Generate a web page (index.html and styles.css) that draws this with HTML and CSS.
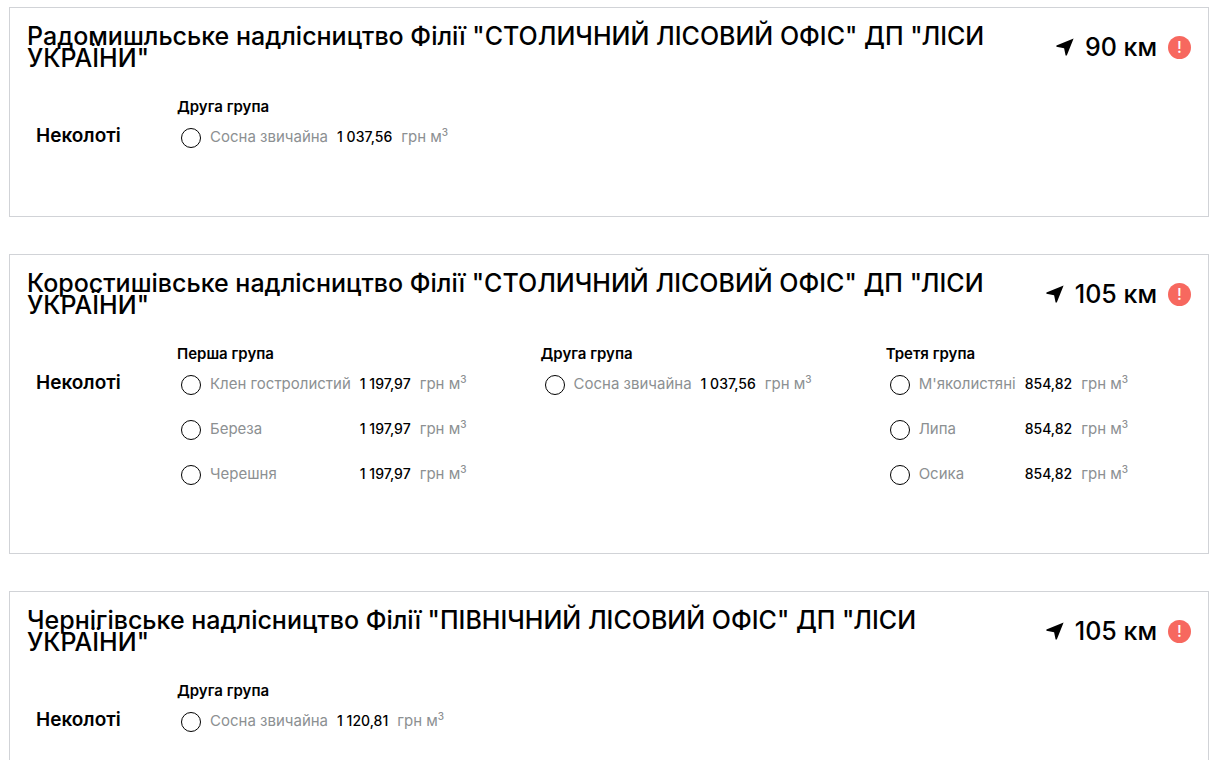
FILE: index.html
```html
<!DOCTYPE html>
<html lang="uk">
<head>
<meta charset="utf-8">
<title>Лісництва</title>
<link rel="stylesheet" href="styles.css">
</head>
<body>
<svg class="defs" aria-hidden="true">
<symbol id="nav" viewBox="0 0 18 18"><path d="M17.6.4.4 7.4v1.4l7.7 1.5 1.5 7.3h1.2z"/></symbol>
</svg>
<main class="list">
<article class="card">
<header class="head"><h2 class="title">Радомишльське надлісництво Філії "СТОЛИЧНИЙ ЛІСОВИЙ ОФІС" ДП "ЛІСИ УКРАЇНИ"</h2>
<div class="distance"><svg class="arrow" aria-hidden="true"><use href="#nav"/></svg><span>90 км</span><button class="alert" type="button" aria-label="Увага">!</button></div></header>
<div class="body"><h3 class="kind">Неколоті</h3><div class="groups">
<section class="group"><h4 class="name">Друга група</h4><div class="rows">
<label class="row"><input class="radio" type="radio" name="wood"><span class="wood">Сосна звичайна</span><span class="price">1 037,56</span><span class="unit">грн м<sup>3</sup></span></label>
</div></section></div></div>
</article>
<article class="card">
<header class="head"><h2 class="title">Коростишівське надлісництво Філії "СТОЛИЧНИЙ ЛІСОВИЙ ОФІС" ДП "ЛІСИ УКРАЇНИ"</h2>
<div class="distance"><svg class="arrow" aria-hidden="true"><use href="#nav"/></svg><span>105 км</span><button class="alert" type="button" aria-label="Увага">!</button></div></header>
<div class="body"><h3 class="kind">Неколоті</h3><div class="groups">
<section class="group"><h4 class="name">Перша група</h4><div class="rows">
<label class="row"><input class="radio" type="radio" name="wood"><span class="wood">Клен гостролистий</span><span class="price">1 197,97</span><span class="unit">грн м<sup>3</sup></span></label>
<label class="row"><input class="radio" type="radio" name="wood"><span class="wood">Береза</span><span class="price">1 197,97</span><span class="unit">грн м<sup>3</sup></span></label>
<label class="row"><input class="radio" type="radio" name="wood"><span class="wood">Черешня</span><span class="price">1 197,97</span><span class="unit">грн м<sup>3</sup></span></label>
</div></section>
<section class="group"><h4 class="name">Друга група</h4><div class="rows">
<label class="row"><input class="radio" type="radio" name="wood"><span class="wood">Сосна звичайна</span><span class="price">1 037,56</span><span class="unit">грн м<sup>3</sup></span></label>
</div></section>
<section class="group"><h4 class="name">Третя група</h4><div class="rows">
<label class="row"><input class="radio" type="radio" name="wood"><span class="wood">М'яколистяні</span><span class="price">854,82</span><span class="unit">грн м<sup>3</sup></span></label>
<label class="row"><input class="radio" type="radio" name="wood"><span class="wood">Липа</span><span class="price">854,82</span><span class="unit">грн м<sup>3</sup></span></label>
<label class="row"><input class="radio" type="radio" name="wood"><span class="wood">Осика</span><span class="price">854,82</span><span class="unit">грн м<sup>3</sup></span></label>
</div></section></div></div>
</article>
<article class="card">
<header class="head"><h2 class="title">Чернігівське надлісництво Філії "ПІВНІЧНИЙ ЛІСОВИЙ ОФІС" ДП "ЛІСИ УКРАЇНИ"</h2>
<div class="distance"><svg class="arrow" aria-hidden="true"><use href="#nav"/></svg><span>105 км</span><button class="alert" type="button" aria-label="Увага">!</button></div></header>
<div class="body"><h3 class="kind">Неколоті</h3><div class="groups">
<section class="group"><h4 class="name">Друга група</h4><div class="rows">
<label class="row"><input class="radio" type="radio" name="wood"><span class="wood">Сосна звичайна</span><span class="price">1 120,81</span><span class="unit">грн м<sup>3</sup></span></label>
</div></section></div></div>
</article>
</main>
</body>
</html>
```
FILE: styles.css
```css
* { box-sizing: border-box; }
body { margin: 0; background: #fff; color: #000; font-family: Inter, "Noto Sans", sans-serif; }
html { scrollbar-width: none; }
h2, h3, h4 { margin: 0; }
.defs { position: absolute; width: 0; height: 0; }
.list { display: flex; flex-direction: column; gap: 37px; padding: 7px 10px 0 9px; }
.card { border: 1px solid #d1d3d7; padding: 17px; }
.head { display: flex; align-items: center; justify-content: space-between; }
.title { max-width: 1000px; font-size: 25px; line-height: 22px; font-weight: 500; }
.distance { display: flex; align-items: center; flex: none; gap: 11px; font-size: 25px; line-height: 28px; font-weight: 500; }
.arrow { width: 18px; height: 18px; }
.alert { width: 23px; height: 23px; padding: 0; border: 0; border-radius: 50%; background: #f7685f; color: #fff; font: 500 16px/23px Inter, sans-serif; }
.body { display: flex; padding-top: 30px; }
.kind { flex: none; width: 150px; padding: 25px 0 0 9px; font-size: 19px; line-height: 24px; font-weight: 600; }
.groups { display: flex; gap: 74px; padding-bottom: 39px; }
.name { font-size: 15px; line-height: 16px; font-weight: 600; }
.rows { display: grid; grid-template-columns: repeat(4, auto); justify-content: start; }
.row { display: grid; grid-template-columns: subgrid; grid-column: 1 / -1; align-items: center; column-gap: 9px; height: 45px; padding-left: 4px; font-size: 15px; line-height: 18px; }
.radio { appearance: none; width: 20px; height: 20px; margin: 0; border: 1px solid #000; border-radius: 50%; background: #fff; }
.wood, .price, .unit { padding-bottom: 2px; }
.wood, .unit { color: #8c9092; white-space: nowrap; }
.price { font-size: 14px; font-weight: 500; white-space: nowrap; }
sup { font-size: 10px; line-height: 0; font-weight: 500; }
```
